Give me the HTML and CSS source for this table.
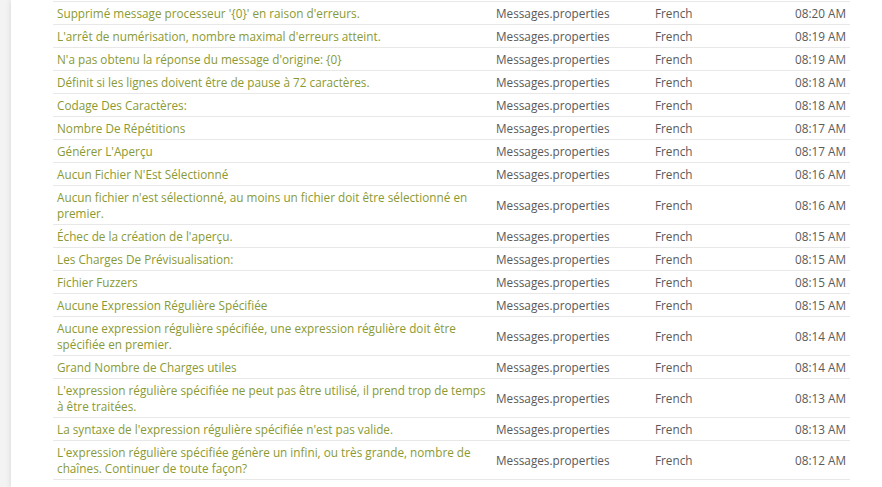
FILE: index.html
```html
<!DOCTYPE html>
<html lang="fr">

<head>
    <meta charset="UTF-8">
    <meta name="viewport" content="width=device-width, initial-scale=1.0">
    <title>Messages</title>
    <link rel="stylesheet" href="styles.css">
</head>

<body>
    <div class="panel">
        <table class="messages">
            <colgroup>
                <col class="col-text">
                <col class="col-file">
                <col class="col-lang">
                <col class="col-time">
            </colgroup>
            <tbody>
                <tr><td class="text">Supprimé message processeur '{0}' en raison d'erreurs.</td><td>Messages.properties</td><td>French</td><td class="time">08:20 AM</td></tr>
                <tr><td class="text">L'arrêt de numérisation, nombre maximal d'erreurs atteint.</td><td>Messages.properties</td><td>French</td><td class="time">08:19 AM</td></tr>
                <tr><td class="text">N'a pas obtenu la réponse du message d'origine: {0}</td><td>Messages.properties</td><td>French</td><td class="time">08:19 AM</td></tr>
                <tr><td class="text">Définit si les lignes doivent être de pause à 72 caractères.</td><td>Messages.properties</td><td>French</td><td class="time">08:18 AM</td></tr>
                <tr><td class="text">Codage Des Caractères:</td><td>Messages.properties</td><td>French</td><td class="time">08:18 AM</td></tr>
                <tr><td class="text">Nombre De Répétitions</td><td>Messages.properties</td><td>French</td><td class="time">08:17 AM</td></tr>
                <tr><td class="text">Générer L'Aperçu</td><td>Messages.properties</td><td>French</td><td class="time">08:17 AM</td></tr>
                <tr><td class="text">Aucun Fichier N'Est Sélectionné</td><td>Messages.properties</td><td>French</td><td class="time">08:16 AM</td></tr>
                <tr><td class="text">Aucun fichier n'est sélectionné, au moins un fichier doit être sélectionné en premier.</td><td>Messages.properties</td><td>French</td><td class="time">08:16 AM</td></tr>
                <tr><td class="text">Échec de la création de l'aperçu.</td><td>Messages.properties</td><td>French</td><td class="time">08:15 AM</td></tr>
                <tr><td class="text">Les Charges De Prévisualisation:</td><td>Messages.properties</td><td>French</td><td class="time">08:15 AM</td></tr>
                <tr><td class="text">Fichier Fuzzers</td><td>Messages.properties</td><td>French</td><td class="time">08:15 AM</td></tr>
                <tr><td class="text">Aucune Expression Régulière Spécifiée</td><td>Messages.properties</td><td>French</td><td class="time">08:15 AM</td></tr>
                <tr><td class="text">Aucune expression régulière spécifiée, une expression régulière doit être spécifiée en premier.</td><td>Messages.properties</td><td>French</td><td class="time">08:14 AM</td></tr>
                <tr><td class="text">Grand Nombre de Charges utiles</td><td>Messages.properties</td><td>French</td><td class="time">08:14 AM</td></tr>
                <tr><td class="text">L'expression régulière spécifiée ne peut pas être utilisé, il prend trop de temps à être traitées.</td><td>Messages.properties</td><td>French</td><td class="time">08:13 AM</td></tr>
                <tr><td class="text">La syntaxe de l'expression régulière spécifiée n'est pas valide.</td><td>Messages.properties</td><td>French</td><td class="time">08:13 AM</td></tr>
                <tr><td class="text">L'expression régulière spécifiée génère un infini, ou très grande, nombre de chaînes. Continuer de toute façon?</td><td>Messages.properties</td><td>French</td><td class="time">08:12 AM</td></tr>
            </tbody>
        </table>
    </div>
</body>

</html>
```

FILE: styles.css
```css
body {
    margin: 0;
    background-color: #f3f3f3;
    font-family: "Open Sans", Arial, sans-serif;
    font-size: 11.75px;
    overflow: hidden;
}

.panel {
    margin-left: 11px;
    min-height: 487px;
    background-color: #fff;
    box-shadow: 0 0 6px rgba(0, 0, 0, 0.12);
    padding: 1px 32px 0 42px;
}

.messages {
    width: 797px;
    border-collapse: collapse;
    table-layout: fixed;
}

.col-text {
    width: 439px;
}

.col-file {
    width: 159px;
}

.col-lang {
    width: 100px;
}

.messages td {
    border-top: 1px solid #e8e8e8;
    padding: 3px 4px;
    line-height: 16px;
    color: #5a5a5a;
    vertical-align: middle;
}

.messages tr:last-child td {
    border-bottom: 1px solid #e8e8e8;
}

.messages td.text {
    color: #8a9a33;
}

.messages td.time {
    text-align: right;
}
```
